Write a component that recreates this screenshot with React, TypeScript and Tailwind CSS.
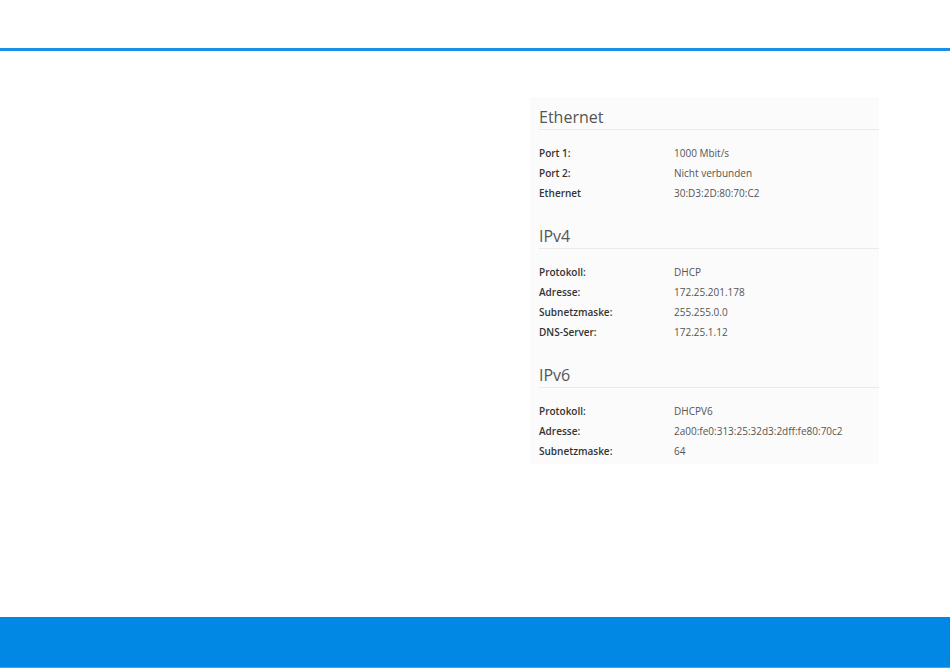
const SECTIONS: { title: string; rows: [string, string][] }[] = [
  {
    title: "Ethernet",
    rows: [
      ["Port 1:", "1000 Mbit/s"],
      ["Port 2:", "Nicht verbunden"],
      ["Ethernet", "30:D3:2D:80:70:C2"],
    ],
  },
  {
    title: "IPv4",
    rows: [
      ["Protokoll:", "DHCP"],
      ["Adresse:", "172.25.201.178"],
      ["Subnetzmaske:", "255.255.0.0"],
      ["DNS-Server:", "172.25.1.12"],
    ],
  },
  {
    title: "IPv6",
    rows: [
      ["Protokoll:", "DHCPV6"],
      ["Adresse:", "2a00:fe0:313:25:32d3:2dff:fe80:70c2"],
      ["Subnetzmaske:", "64"],
    ],
  },
];

export default function App() {
  return (
    <div className="flex h-[668px] w-[950px] flex-col bg-white font-['Open_Sans',sans-serif]">
      <header className="h-[51px] shrink-0 border-b-[3px] border-[#1990e6] bg-white" />

      <main className="flex flex-1 justify-end pr-[71px] pt-[46px]">
        <div className="h-[367px] w-[349px] bg-[#fbfbfb] pl-[9px] pt-[8px]">
          {SECTIONS.map((section) => (
            <section key={section.title} className="mb-[21px]">
              <h2 className="border-b border-[#ebebeb] text-[16px] leading-[24px] text-[#555]">
                {section.title}
              </h2>
              <div className="mt-[13px]">
                {section.rows.map(([label, value]) => (
                  <div key={label} className="flex h-[20px] items-center text-[10px]">
                    <span className="w-[135px] shrink-0 font-semibold text-[#333]">{label}</span>
                    <span className="text-[#555]">{value}</span>
                  </div>
                ))}
              </div>
            </section>
          ))}
        </div>
      </main>

      <footer className="h-[51px] shrink-0 border-b border-[#3aa5f0] bg-[#0088e4]" />
    </div>
  );
}
